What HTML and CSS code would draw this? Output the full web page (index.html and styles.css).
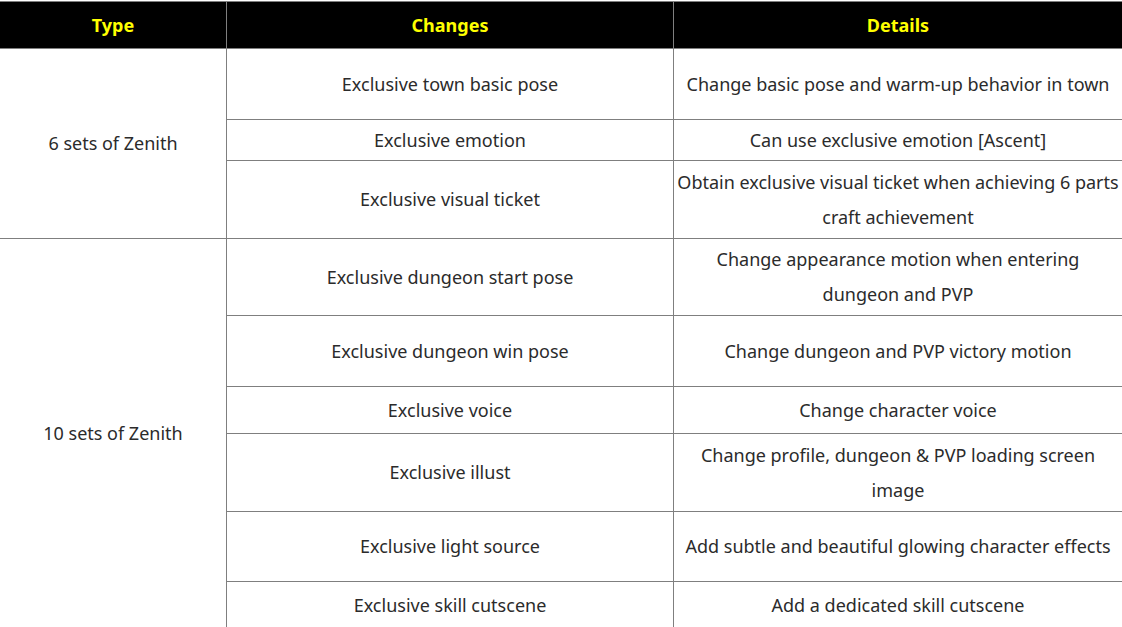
FILE: index.html
```html
<!DOCTYPE html>
<html>
<head>
<meta charset="utf-8">
<link rel="stylesheet" href="styles.css">
</head>
<body>
<table class="zt">
  <colgroup>
    <col class="c1"><col class="c2"><col class="c3">
  </colgroup>
  <thead>
    <tr class="h-head">
      <th>Type</th>
      <th class="bl">Changes</th>
      <th class="bl">Details</th>
    </tr>
  </thead>
  <tbody>
    <tr class="h71">
      <td rowspan="3">6 sets of Zenith</td>
      <td class="bl">Exclusive town basic pose</td>
      <td class="bl">Change basic pose and warm-up behavior in town</td>
    </tr>
    <tr class="h41">
      <td class="bl">Exclusive emotion</td>
      <td class="bl">Can use exclusive emotion [Ascent]</td>
    </tr>
    <tr class="h78">
      <td class="bl">Exclusive visual ticket</td>
      <td class="bl">Obtain exclusive visual ticket when achieving 6 parts craft achievement</td>
    </tr>
    <tr class="h77">
      <td rowspan="6">10 sets of Zenith</td>
      <td class="bl">Exclusive dungeon start pose</td>
      <td class="bl">Change appearance motion when entering dungeon and PVP</td>
    </tr>
    <tr class="h71">
      <td class="bl">Exclusive dungeon win pose</td>
      <td class="bl">Change dungeon and PVP victory motion</td>
    </tr>
    <tr class="h47">
      <td class="bl">Exclusive voice</td>
      <td class="bl">Change character voice</td>
    </tr>
    <tr class="h78">
      <td class="bl">Exclusive illust</td>
      <td class="bl">Change profile, dungeon &amp; PVP loading screen image</td>
    </tr>
    <tr class="h70">
      <td class="bl">Exclusive light source</td>
      <td class="bl">Add subtle and beautiful glowing character effects</td>
    </tr>
    <tr class="h47">
      <td class="bl">Exclusive skill cutscene</td>
      <td class="bl">Add a dedicated skill cutscene</td>
    </tr>
  </tbody>
</table>
</body>
</html>
```

FILE: styles.css
```css
html, body {
  margin: 0;
  padding: 0;
  background: #ffffff;
}
body {
  padding-top: 1px;
  font-family: "Noto Sans", "Open Sans", sans-serif;
  color: #2b2b2b;
}
.zt {
  width: 1122px;
  table-layout: fixed;
  border-collapse: separate;
  border-spacing: 0;
  border-top: 1px solid #7f7f7f;
}
.c1 { width: 226px; }
.c2 { width: 447px; }
.c3 { width: 449px; }
.zt th, .zt td {
  padding: 0 2px;
  text-align: center;
  vertical-align: middle;
  border-bottom: 1px solid #7f7f7f;
  font-size: 18px;
  line-height: 35px;
  box-sizing: border-box;
}
.zt th {
  background: #000000;
  color: #ffff00;
  font-weight: 700;
}
.zt .bl { border-left: 1px solid #7f7f7f; }
.h-head { height: 47px; }
.h71 { height: 71px; }
.h41 { height: 41px; }
.h78 { height: 78px; }
.h77 { height: 77px; }
.h47 { height: 47px; }
.h70 { height: 70px; }
```
